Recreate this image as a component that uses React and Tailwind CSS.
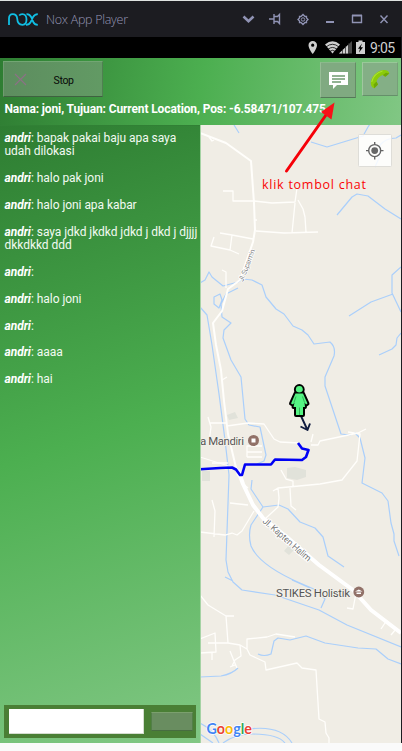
import React from "react";

const messages = [
  ["bapak pakai baju apa saya", "udah dilokasi"],
  ["halo pak joni"],
  ["halo joni apa kabar"],
  ["saya jdkd jkdkd jdkd j dkd j djjjj", "dkkdkkd ddd"],
  [],
  ["halo joni"],
  [],
  ["aaaa"],
  ["hai"],
];

function TitleBar() {
  return (
    <div className="flex h-[37px] shrink-0 items-center border-t border-[#dfe3e1] bg-[#1c1c21] pl-2 pr-3">
      <svg width="30" height="13" viewBox="0 0 30 13" fill="none" stroke="#10bfe4" strokeWidth="1.8">
        <path d="M1 12V5.5Q1 1.2 4.8 1.2Q8.700 1.200 9.200 5.500Q9.500 11.800 14.500 11.800Q18.500 11.800 18.500 6.500Q18.500 1.200 14.300 1.200Q12.200 1.200 11.200 2.600" />
        <path d="M18.500 1.200Q21.500 1 23.300 4.200L25.200 8.800Q26.500 11.800 29.800 11.800M29.800 1.200Q26.500 1.200 25 4.200L22.800 8.800Q21.300 11.800 18 11.800" />
      </svg>
      <svg className="ml-2" width="84" height="20">
        <text x="0" y="14.500" textLength="82" fill="#9696b5" fontSize="12.500" fontWeight="300" className="font-['Open_Sans',sans-serif]">Nox App Player</text>
      </svg>
      <svg className="ml-auto" width="148" height="16" viewBox="243 11 148 16" fill="none" stroke="#9093b4" strokeWidth="1.400">
        <path d="M244.500 16.500L249.500 21.200L254.500 16.500" strokeWidth="2.600" strokeLinejoin="miter" />
        <path d="M270 19H275M275 14V24M275.500 16.500H278.500L280.500 14.500V23.500L278.500 21.500H275.500" />
        <path d="M302 16.500L304 14.500L306 16.500H307.500V18L309 19.500L307.500 21V22.500H306L304 24.500L302 22.500H300.500V21L299 19.500L300.500 18V16.500Z" strokeWidth="1.300" />
        <circle cx="304" cy="19.500" r="1.700" strokeWidth="1" />
        <path d="M327 22H335" strokeWidth="2" />
        <path d="M353.500 15V22.500H362.500V15" />
        <path d="M353 15.500H363" strokeWidth="2" />
        <path d="M381.500 15.500L388.500 23M388.500 15.500L381.500 23" />
      </svg>
    </div>
  );
}

function StatusBar() {
  return (
    <div className="flex h-[21px] shrink-0 items-center justify-end bg-black pr-[5px]">
      <svg width="62" height="17" viewBox="307 39 62 17" fill="#cfcfcf">
        <path fillRule="evenodd" d="M313.700 41A4.200 4.200 0 0 0 309.500 45.200C309.500 48.500 313.700 54 313.700 54S318 48.500 318 45.200A4.200 4.200 0 0 0 313.700 41ZM313.700 43.600A1.600 1.600 0 1 1 313.700 46.800A1.600 1.600 0 1 1 313.700 43.600Z" />
        <path d="M326 44.500Q333.500 38 341 44.500L333.500 53.500Z" />
        <path d="M327 47Q333.500 41.500 340 47M329 49.300Q333.500 45.600 338 49.300M331 51.300Q333.500 49.200 336 51.300" fill="none" stroke="#000" strokeWidth=".8" />
        <path d="M340 53.500L353 41V53.500Z" fill="#4a4a4a" />
        <path d="M340 53.500L349.500 44.500V53.500Z" />
        <path d="M343.500 49V54M346.500 46V54M349.500 43V54" stroke="#222" strokeWidth=".7" />
        <path fillRule="evenodd" d="M357 42H359.500V40.500H363.500V42H366V54H357ZM363 43.500L359 48.700H361L360 52.500L364 47.200H361.700Z" />
      </svg>
      <svg width="28" height="18">
        <text x="2" y="14" textLength="25" fill="#cfcfcf" fontSize="14" className="font-[Roboto,sans-serif]">9:05</text>
      </svg>
    </div>
  );
}

function Header() {
  return (
    <div className="flex h-[67px] shrink-0 flex-col bg-[linear-gradient(99.5deg,#2e7d32,#4caf50_50%,#81c784)] pl-[3px] pr-[3px] pt-[3px]">
      <div className="flex h-[37px] items-start">
        <button className="flex h-9 w-[100px] items-center border border-b-[#3e6240] border-l-[#709b70] border-r-[#4f8051] border-t-[#72a673] bg-[linear-gradient(90deg,#5d8d5f,#629a64)]">
          <svg className="ml-[10px]" width="13" height="13" viewBox="0 0 13 13" stroke="#8b7185" strokeWidth="1.200">
            <path d="M1 1L12 12M12 1L1 12" />
          </svg>
          <svg className="ml-[26px]" width="24" height="18">
            <text x="0.500" y="13.500" textLength="20.500" fill="#080808" fontSize="10.500" className="font-[Roboto,sans-serif]">Stop</text>
          </svg>
        </button>
        <button className="ml-auto mt-[1px] flex h-9 w-[36px] items-center justify-center border border-b-[#557958] border-l-[#96bd95] border-r-[#658c66] border-t-[#8aba8b] bg-[#80aa81]">
          <svg width="19" height="17" viewBox="0 0 19 17">
            <path d="M0 0H19V13H8L4 17V13H0Z" fill="#fff" />
            <path d="M3 4H16M3 7H16M3 10H12" stroke="#6f9a70" strokeWidth="1.300" />
          </svg>
        </button>
        <button className="ml-[6px] mt-[1px] flex h-[34px] w-[36px] items-center justify-center border border-b-[#65906a] border-l-[#a0c79f] border-r-[#76a078] border-t-[#98c998] bg-[#84af86]">
          <svg width="20" height="20" viewBox="0 0 20 20">
            <path d="M.8 14.500C.5 8.500 6.500 1.500 13.500 1C17 .8 19.300 2.500 19.300 4.500L15.300 7.800L12.800 6C9.800 6.800 7.300 9.500 6.500 12.500L8 15.500L4.300 19.200C2.300 18.800 1 17 .8 14.500Z" fill="#8ccb0a" />
            <path d="M6.500 12.500L8 15.500L4.300 19.200L3.500 15.500ZM12.800 6L15.300 7.800L19.300 4.500L16 3.800Z" fill="#6fa806" />
            <path d="M1.700 13Q3.500 4.500 12.500 2" fill="none" stroke="#a8e22c" strokeWidth="1.200" />
          </svg>
        </button>
      </div>
      <svg width="340" height="20">
        <text x="1.500" y="15" textLength="321.500" fill="#fff" fontSize="12" fontWeight="700" className="font-[Roboto,sans-serif]">Nama: joni, Tujuan: Current Location, Pos: -6.58471/107.475</text>
      </svg>
    </div>
  );
}

function Chat() {
  return (
    <div className="flex w-[200px] shrink-0 flex-col border-t border-[#318035] bg-[linear-gradient(162deg,#2e7d32,#4caf50_50%,#81c784)]">
      <div className="flex flex-col gap-[13.4px] whitespace-nowrap pl-[4.500px] pt-[6px] font-[Roboto,sans-serif] text-[12px] leading-[13.4px] tracking-[-0.05px] text-[#f2faf2]">
        {messages.map(([first, second], i) => (
          <div key={i} className="flex flex-col">
            <div className="flex">
              <b className="italic text-white">andri</b>
              <span>:</span>
              {first && <span className="ml-[3px]">{first}</span>}
            </div>
            {second && <div>{second}</div>}
          </div>
        ))}
      </div>
      <div className="mb-[5px] ml-1 mr-1 mt-auto flex h-[33px] items-center justify-between bg-[#4a7f35] pl-[5px] pr-[3px]">
        <div className="h-[25px] w-[135px] border-b border-r border-[#d5ddd0] bg-white"></div>
        <div className="h-[19px] w-[42px] border border-b-[#476d40] border-l-[#527f48] border-r-[#527f48] border-t-[#7ba06d] bg-[#698d60]"></div>
      </div>
    </div>
  );
}

function Map() {
  return (
    <svg className="block bg-[#f0ede5]" width="201" height="618" viewBox="200 125 201 618" fill="none" strokeLinejoin="round">
      <g fill="#e1e2da">
        <path d="M227 415L235 412L238 418L229 420ZM287 468L295 467L306 470V477L297 480L287 478ZM284 551L289 545L294 550L289 555ZM202 471H210V481H202Z" />
      </g>
      <g stroke="#aacffb" strokeWidth="1.200">
        <path d="M234 125L239 133M311 142L327 147L363 136L368 127L370 124M401 135L396 138Q386 138 380 145L379 158L375 167" />
        <path d="M337 215L352 197L357 194L368 196L385 209L401 219" />
        <path d="M401 267L392 275V293L401 312M393 294L371 302L349 316M401 333L397 338L396 345L392 349L379 355" />
        <path d="M200 283L205 280L209 272L212 277L223 286L238 282L243 279L252 280L262 285L266 297L276 309L284 314L293 326L302 330L308 335L314 344L330 342Q336 347 334 356L325 377V386L336 419L341 434L350 435L355 433L360 438L365 458L362 483L382 493L388 501L391 523L394 534V541L399 556" />
        <path d="M238 288L226 294L221 304L222 317L231 323L224 330L223 338L231 360L241 377L245 419L249 425L260 427L266 455L264 461L257 464M220 294L214 297V304L219 308L222 300ZM200 307L207 315L212 345L219 394L225 440L229 475L226 560L228 572L233 582L242 590L275 595L319 610L347 625L401 647M225 577L233 581" />
        <path d="M252 480L251 489L263 507L251 525Q248 535 251 546Q259 565 300 583L316 590L325 599L321 608M263 507L279 505L288 509L300 522L315 528L323 537L328 556L344 567M292 580L310 588" />
        <path d="M258 654Q264 657 271 654L274 641L278 638L290 640L306 636L325 643L358 648L376 649L388 659L401 664M200 677L221 676Q232 674 238 668M200 723Q214 730 219 743M200 734L213 743M223 743Q235 734 252 734Q278 734 285 743M249 729Q281 725 292 743" />
      </g>
      <g stroke="#fffefb" strokeWidth="1.300">
        <path d="M200 133L226 143L251 161L254 203L255 230L253 242L240 280L228 289L222 311L213 323L216 345L221 370L224 401L228 434L238 476" strokeWidth="2" />
        <path d="M209 137L212 141L214 140M223 191H233V201H254L263 202L272 203L295 202L297 188M295 203L292 233M298 200L303 209L305 217L306 232M256 231L284 233L318 232M253 239L232 235L220 233M232 235L230 250L239 254M230 250L211 246L214 237M254 220H257M226 288V272L222 270M222 380L227 377" />
        <path d="M208 417L211 427L209 442M210 423H227M227 426L248 423L264 424L274 439L280 442L299 443M311 445H318L320 441L358 433L366 429M348 432L360 434L357 461L342 480L320 484L278 488L279 498L278 507L266 518M278 488L273 491M281 470L286 479L293 481V486M290 488L291 506L296 510M212 463H228M230 503L248 505M212 500L215 511L214 537M200 532L225 535L232 533L237 535L242 531L254 511M247 457H262M247 452H262M247 457V446H262M313 434L311 442M242 483L248 488" />
        <path d="M200 595L208 605L226 616L228 643M226 616H234M208 643L228 643L240 645L247 649L250 655L265 662L266 670L297 663L302 668L316 670L319 719L325 722L326 733L329 738V743M240 645L241 656L235 660L232 666M230 651L234 661L237 668M230 667L235 665M247 649V639L267 637L276 634L295 637M200 639L215 633L216 652L200 653M212 653V660M356 593L353 609L347 608M387 620L381 629M396 629L391 635" />
        <path d="M200 457L238 469" strokeWidth="1" />
      </g>
      <path d="M238 470L243 484L253 505L263 518L288 538L319 565L353 590L371 610L401 633" stroke="#fff" strokeWidth="4" />
      <path d="M200 469.300L220 468L232 467.500L236 469.500L240 475H242L245 464.500L271 464.500L275 459.500L302 460L306 457L308.500 450L302 448.500L298 443" stroke="#0000f4" strokeWidth="2.600" />
      <g className="font-[Roboto,sans-serif]" fill="#555555">
        <text x="200" y="445" fontSize="11.500" textLength="44" stroke="#f3f0e9" strokeWidth="2" paintOrder="stroke">a Mandiri</text>
        <text x="276" y="597" fontSize="11.500" textLength="74" stroke="#f3f0e9" strokeWidth="2" paintOrder="stroke">STIKES Holistik</text>
        <text transform="translate(262 522) rotate(41)" fontSize="9" textLength="61" fill="#777" stroke="#fff" strokeWidth="2" paintOrder="stroke">Jl. Kapten Halim</text>
        <text transform="translate(243 282) rotate(-69)" fontSize="7" textLength="34" fill="#777" stroke="#fff" strokeWidth="1.500" paintOrder="stroke">Jl. Suparmin</text>
      </g>
      <circle cx="253.500" cy="440.500" r="5.500" fill="#917168" />
      <rect x="251.500" y="438.500" width="4" height="4" fill="#fff" />
      <circle cx="358.800" cy="592" r="5.400" fill="#917168" />
      <path d="M355 591.500L358.800 589.500L362.500 591.500ZM356.500 592.500H361V594H356.500Z" fill="#fff" />

      <g>
        <path d="M301 416L307 429M300.500 426.500L307.500 430L310 423.500" stroke="#101c40" strokeWidth="1.900" />
        <g fill="#55f483" stroke="#000" strokeWidth="4" paintOrder="stroke">
          <circle cx="299.300" cy="389.500" r="3.400" />
          <path d="M295.500 393.500H303L307.500 403.500L306 404.500L304.500 402.500L305 407H303V415H296V407H293.500L294.500 402.500L293 404.500L291 403.500Z" />
        </g>
        <circle cx="299.300" cy="389.500" r="3" fill="#55f483" />
        <path d="M296 396.500L294 402.500M302.500 396.500L304.500 402.500M299.500 407.500V415" stroke="#269748" strokeWidth=".7" />
      </g>
      <text x="206.500" y="733.500" fontSize="16" fontWeight="700" textLength="45.500" lengthAdjust="spacingAndGlyphs" stroke="#fff" strokeWidth="1.500" paintOrder="stroke" className="font-[Lato,sans-serif]">
        <tspan fill="#4285f4">G</tspan><tspan fill="#ea4335">o</tspan><tspan fill="#fbbc05">o</tspan><tspan fill="#4285f4">g</tspan><tspan fill="#34a853">l</tspan><tspan fill="#ea4335">e</tspan>
      </text>
      <rect x="358.500" y="134.500" width="33" height="32" rx="1" fill="#fff" fillOpacity=".85" stroke="#deddd8" />
      <circle cx="374.700" cy="150.600" r="6" stroke="#666" strokeWidth="1.400" />
      <circle cx="374.700" cy="150.600" r="3.400" fill="#666" />
      <path d="M366 150.600H369M380.500 150.600H383.500M374.700 142V145M374.700 156.500V159.500" stroke="#666" strokeWidth="1.400" />
      <path d="M200.500 125V743" stroke="#a5d3a4" />
    </svg>
  );
}

export default function App() {
  return (
    <div className="relative flex h-[751px] w-[402px] flex-col overflow-hidden bg-[#fafafa]">
      <TitleBar />
      <div className="flex flex-col border-r border-[#1c1c21]">
        <StatusBar />
        <Header />
        <div className="flex h-[618px]">
          <Chat />
          <Map />
        </div>
      </div>
      <svg className="pointer-events-none absolute left-[255px] top-[98px]" width="120" height="98" viewBox="255 98 120 98">
        <path d="M286.500 171L326 115" stroke="#f60008" strokeWidth="3" strokeLinecap="round" />
        <path d="M334.500 102.500L331.500 119.500L321 112Z" fill="#f81218" />
        <text x="262" y="188.500" fontSize="12.500" textLength="104" fill="#fa0505" className="font-['Open_Sans',sans-serif]">klik tombol chat</text>
      </svg>
    </div>
  );
}
